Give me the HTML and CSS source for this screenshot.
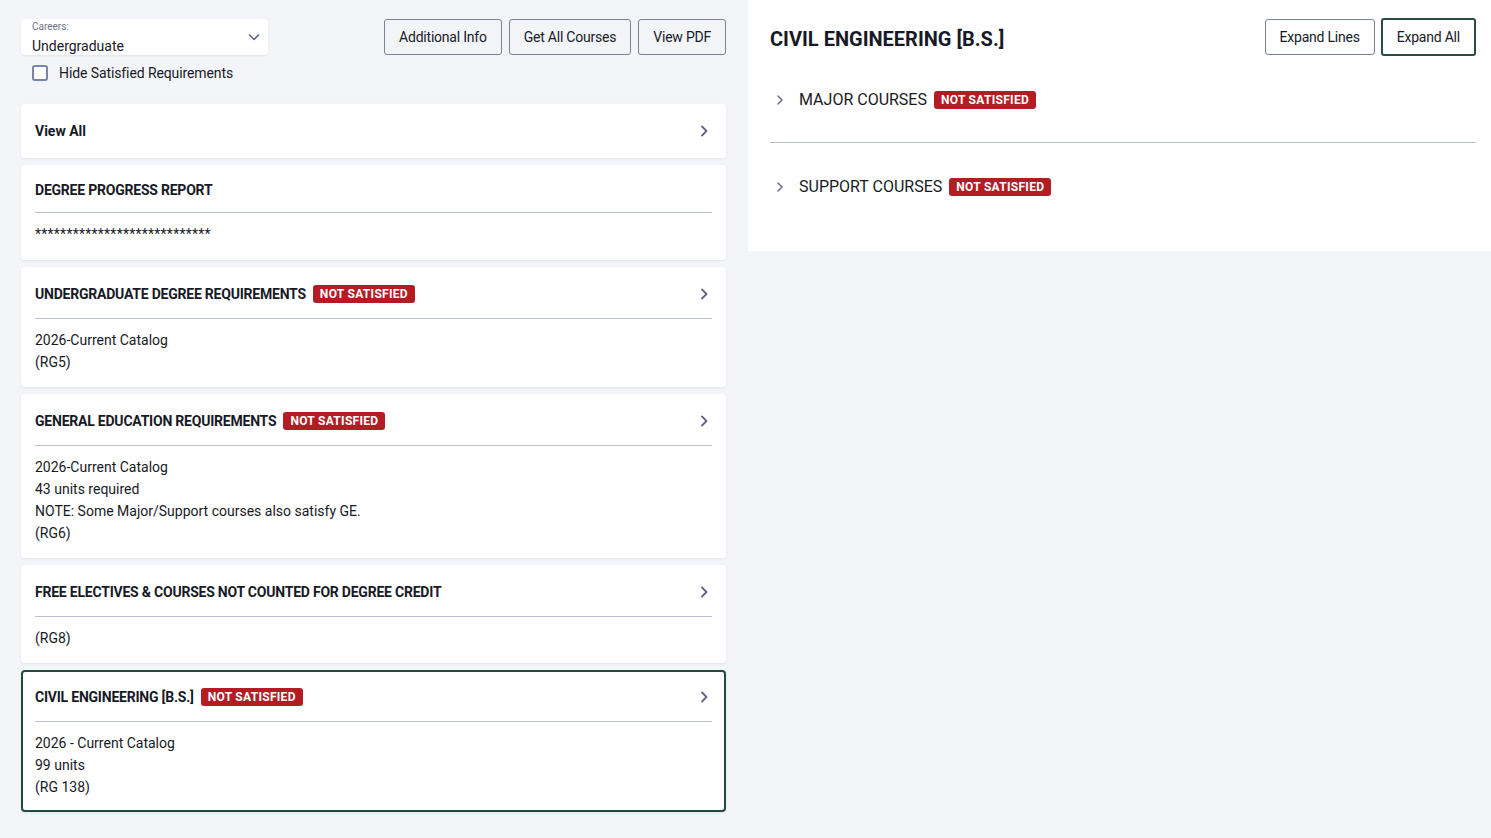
FILE: index.html
```html
<!DOCTYPE html>
<html lang="en">
<head>
<meta charset="utf-8">
<title>Degree Progress</title>
<link rel="stylesheet" href="styles.css">
</head>
<body>
<div class="page">
  <main class="left">
    <div class="toolbar">
      <div class="filters">
        <div class="select">
          <div class="select-text">
            <span class="select-label">Careers:</span>
            <span class="select-value">Undergraduate</span>
          </div>
          <svg class="select-chevron" width="14" height="14" viewBox="0 0 14 14"><path d="M2.5 5l4.5 4.5L11.5 5" fill="none" stroke="#5f6685" stroke-width="1.6" stroke-linecap="round" stroke-linejoin="round"/></svg>
        </div>
        <label class="check"><span class="check-box"></span><span>Hide Satisfied Requirements</span></label>
      </div>
      <div class="actions">
        <button class="btn">Additional Info</button>
        <button class="btn">Get All Courses</button>
        <button class="btn">View PDF</button>
      </div>
    </div>

    <div class="cards">
      <section class="card card-plain">
        <div class="card-head">
          <h2 class="card-title card-title-normal">View All</h2>
          <svg class="chev" width="16" height="24" viewBox="0 0 16 24"><path d="M6 7.5l4.5 4.5L6 16.5" fill="none" stroke="#5f6685" stroke-width="1.8" stroke-linecap="round" stroke-linejoin="round"/></svg>
        </div>
      </section>

      <section class="card">
        <div class="card-head card-head-short">
          <h2 class="card-title">DEGREE PROGRESS REPORT</h2>
        </div>
        <div class="card-body card-body-stars"><div class="stars">****************************</div></div>
      </section>

      <section class="card">
        <div class="card-head">
          <div class="title-group"><h2 class="card-title">UNDERGRADUATE DEGREE REQUIREMENTS</h2><span class="badge">NOT SATISFIED</span></div>
          <svg class="chev" width="16" height="24" viewBox="0 0 16 24"><path d="M6 7.5l4.5 4.5L6 16.5" fill="none" stroke="#5f6685" stroke-width="1.8" stroke-linecap="round" stroke-linejoin="round"/></svg>
        </div>
        <div class="card-body">
          <p>2026-Current Catalog</p>
          <p>(RG5)</p>
        </div>
      </section>

      <section class="card">
        <div class="card-head">
          <div class="title-group"><h2 class="card-title">GENERAL EDUCATION REQUIREMENTS</h2><span class="badge">NOT SATISFIED</span></div>
          <svg class="chev" width="16" height="24" viewBox="0 0 16 24"><path d="M6 7.5l4.5 4.5L6 16.5" fill="none" stroke="#5f6685" stroke-width="1.8" stroke-linecap="round" stroke-linejoin="round"/></svg>
        </div>
        <div class="card-body">
          <p>2026-Current Catalog</p>
          <p>43 units required</p>
          <p>NOTE: Some Major/Support courses also satisfy GE.</p>
          <p>(RG6)</p>
        </div>
      </section>

      <section class="card">
        <div class="card-head">
          <h2 class="card-title">FREE ELECTIVES &amp; COURSES NOT COUNTED FOR DEGREE CREDIT</h2>
          <svg class="chev" width="16" height="24" viewBox="0 0 16 24"><path d="M6 7.5l4.5 4.5L6 16.5" fill="none" stroke="#5f6685" stroke-width="1.8" stroke-linecap="round" stroke-linejoin="round"/></svg>
        </div>
        <div class="card-body">
          <p>(RG8)</p>
        </div>
      </section>

      <section class="card card-active">
        <div class="card-head">
          <div class="title-group"><h2 class="card-title">CIVIL ENGINEERING [B.S.]</h2><span class="badge">NOT SATISFIED</span></div>
          <svg class="chev" width="16" height="24" viewBox="0 0 16 24"><path d="M6 7.5l4.5 4.5L6 16.5" fill="none" stroke="#5f6685" stroke-width="1.8" stroke-linecap="round" stroke-linejoin="round"/></svg>
        </div>
        <div class="card-body">
          <p>2026 - Current Catalog</p>
          <p>99 units</p>
          <p>(RG 138)</p>
        </div>
      </section>
    </div>
  </main>

  <aside class="detail">
    <div class="detail-head">
      <h1 class="detail-title">CIVIL ENGINEERING [B.S.]</h1>
      <div class="detail-actions">
        <button class="btn btn-white">Expand Lines</button>
        <button class="btn btn-white btn-focus">Expand All</button>
      </div>
    </div>
    <div class="section">
      <div class="section-row">
        <svg class="section-chev" width="22" height="20" viewBox="0 0 22 20"><path d="M8 6l4 4-4 4" fill="none" stroke="#6b7190" stroke-width="1.6" stroke-linecap="round" stroke-linejoin="round"/></svg>
        <span class="section-title">MAJOR COURSES</span>
        <span class="badge">NOT SATISFIED</span>
      </div>
    </div>
    <div class="section section-last">
      <div class="section-row">
        <svg class="section-chev" width="22" height="20" viewBox="0 0 22 20"><path d="M8 6l4 4-4 4" fill="none" stroke="#6b7190" stroke-width="1.6" stroke-linecap="round" stroke-linejoin="round"/></svg>
        <span class="section-title">SUPPORT COURSES</span>
        <span class="badge">NOT SATISFIED</span>
      </div>
    </div>
  </aside>
</div>
</body>
</html>
```

FILE: styles.css
```css
* { box-sizing: border-box; }

html, body {
  margin: 0;
  padding: 0;
  background: #f4f5f9;
  font-family: Roboto, "Noto Sans", Arial, sans-serif;
  color: #171a26;
}

.page {
  display: grid;
  grid-template-columns: 705px 1fr;
  column-gap: 22px;
  padding-left: 21px;
  min-height: 838px;
  align-items: start;
}

/* ---------- left column ---------- */
.left {
  padding-top: 19px;
  padding-bottom: 26px;
}

.toolbar {
  display: flex;
  justify-content: space-between;
  align-items: flex-start;
  margin-bottom: 23px;
}

.select {
  width: 247px;
  height: 36px;
  background: #fff;
  border-radius: 4px;
  box-shadow: 0 1px 2px rgba(30, 35, 60, 0.08);
  display: flex;
  align-items: center;
  justify-content: space-between;
  padding: 0 7px 0 11px;
}

.select-text {
  display: flex;
  flex-direction: column;
  align-self: flex-start;
  padding-top: 2px;
}

.select-label {
  font-size: 10px;
  line-height: 12px;
  color: #6d7185;
}

.select-value {
  font-size: 14px;
  line-height: 18px;
  margin-top: 4px;
  color: #171a26;
}

.check {
  display: flex;
  align-items: center;
  gap: 11px;
  margin-top: 10px;
  padding-left: 11px;
  font-size: 14px;
  line-height: 16px;
  letter-spacing: -0.1px;
  color: #171a26;
}

.check-box {
  width: 16px;
  height: 16px;
  border: 2px solid #7b82a8;
  border-radius: 3px;
  background: #fff;
}

.actions {
  display: flex;
  gap: 7px;
}

.btn {
  height: 36px;
  padding: 0 14px;
  border: 1px solid #7a8199;
  border-radius: 3px;
  background: transparent;
  font-family: inherit;
  font-size: 14px;
  letter-spacing: -0.22px;
  color: #171a26;
}

.cards {
  display: flex;
  flex-direction: column;
  gap: 7px;
}

.card {
  background: #fff;
  border-radius: 4px;
  box-shadow: 0 1px 3px rgba(30, 35, 60, 0.08);
  padding: 0 14px;
}

.card-head {
  display: flex;
  align-items: center;
  justify-content: space-between;
  padding: 15px 0 12px;
  border-bottom: 1px solid #bcc0d4;
}

.card-plain .card-head {
  border-bottom: 0;
  padding-bottom: 15px;
}

.card-title {
  margin: 0;
  font-size: 14px;
  line-height: 20px;
  font-weight: 700;
  letter-spacing: -0.22px;
  color: #171a26;
}

.card-title-normal {
  letter-spacing: 0;
}

.title-group {
  display: flex;
  align-items: center;
  gap: 7px;
}

.chev {
  flex: none;
  display: block;
}

.card-body {
  padding: 10px 0 14px;
  font-size: 14px;
  line-height: 22px;
}

.card-body-stars {
  padding-bottom: 15px;
}

.card-body p {
  margin: 0;
}

.stars {
  font-size: 14px;
  letter-spacing: 0.25px;
}

.card-active {
  border: 2px solid #1f4c3c;
  padding: 0 12px;
}

.card-active .card-head {
  padding-top: 13px;
}

.card-active .card-body {
  padding-bottom: 12px;
}

.badge {
  display: inline-block;
  height: 18px;
  line-height: 18px;
  padding: 0 7px;
  border-radius: 3px;
  background: #b41c24;
  color: #fff;
  font-size: 12px;
  font-weight: 700;
  letter-spacing: 0.3px;
  white-space: nowrap;
}

/* ---------- right panel ---------- */
.detail {
  background: #fff;
  padding: 18px 15px 22px 22px;
}

.detail-head {
  display: flex;
  justify-content: space-between;
  align-items: center;
  height: 38px;
}

.detail-title {
  margin: 0;
  padding-top: 3px;
  font-size: 20px;
  font-weight: 700;
  line-height: 26px;
  color: #171a26;
}

.detail-actions {
  display: flex;
  align-items: center;
  gap: 6px;
}

.btn-white {
  background: #fff;
}

.btn-focus {
  height: 38px;
  border: 2px solid #2b4a45;
}

.section {
  padding: 34px 0 32px;
  border-bottom: 1px solid #b8bdd0;
}

.section-last {
  border-bottom: 0;
}

.section-row {
  display: flex;
  align-items: center;
  height: 20px;
}

.section-chev {
  display: block;
  margin-right: 7px;
}

.section-title {
  font-size: 16px;
  line-height: 20px;
  margin-right: 7px;
  color: #171a26;
}
```
